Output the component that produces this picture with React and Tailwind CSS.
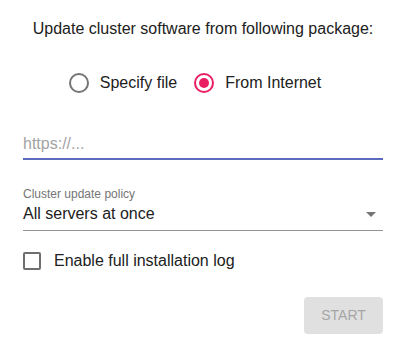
import { useState } from 'react';

export default function App() {
  const [source, setSource] = useState('internet');
  const [fullLog, setFullLog] = useState(false);

  return (
    <div className="w-[405px] h-[355px] bg-white text-[#212121] font-['Liberation_Sans',Arial,sans-serif] pl-[23px] pr-[22px]">
      {/* Heading */}
      <p className="pt-[20px] text-center text-[16px] leading-[18px]">
        Update cluster software from following package:
      </p>

      {/* Source choice */}
      <div className="mt-[35px] flex items-center justify-center pr-[16px] text-[16px] leading-[18px]">
        <label className="flex items-center gap-[11px] cursor-pointer" onClick={() => setSource('file')}>
          <span
            className={`w-[20px] h-[20px] rounded-full border-2 flex items-center justify-center ${
              source === 'file' ? 'border-[#e91e63]' : 'border-[#757575]'
            }`}
          >
            {source === 'file' && <span className="w-[10px] h-[10px] rounded-full bg-[#e91e63]" />}
          </span>
          <span>Specify file</span>
        </label>
        <label className="ml-[17px] flex items-center gap-[11px] cursor-pointer" onClick={() => setSource('internet')}>
          <span
            className={`w-[20px] h-[20px] rounded-full border-2 flex items-center justify-center ${
              source === 'internet' ? 'border-[#e91e63]' : 'border-[#757575]'
            }`}
          >
            {source === 'internet' && <span className="w-[10px] h-[10px] rounded-full bg-[#e91e63]" />}
          </span>
          <span>From Internet</span>
        </label>
      </div>

      {/* URL field */}
      <div className="mt-[39px] border-b-2 border-[#5c6bc0] pb-[2px]">
        <input
          type="text"
          placeholder="https://..."
          className="w-full text-[16px] leading-[18px] h-[18px] outline-none placeholder:text-[#a3a3a3] bg-transparent"
        />
      </div>

      {/* Policy select */}
      <div className="mt-[27px]">
        <p className="text-[12px] leading-[14px] text-[#757575]">Cluster update policy</p>
        <div className="mt-[4px] flex items-center justify-between border-b border-[#949494] pb-[7px]">
          <span className="text-[16px] leading-[18px]">All servers at once</span>
          <svg width="10" height="5" viewBox="0 0 10 5" className="mr-[7px]">
            <path d="M0 0 L10 0 L5 5 Z" fill="#757575" />
          </svg>
        </div>
      </div>

      {/* Log checkbox */}
      <label className="mt-[21px] flex items-center gap-[13px] cursor-pointer" onClick={() => setFullLog(!fullLog)}>
        <span className="w-[18px] h-[18px] rounded-[2px] border-2 border-[#6e6e6e]" />
        <span className="text-[16px] leading-[18px]">Enable full installation log</span>
      </label>

      {/* Action */}
      <div className="mt-[27px] flex justify-end">
        <button
          disabled
          className="w-[79px] h-[37px] rounded-[4px] bg-[#e0e0e0] text-[#a6a6a6] text-[14px] uppercase"
        >
          Start
        </button>
      </div>
    </div>
  );
}
